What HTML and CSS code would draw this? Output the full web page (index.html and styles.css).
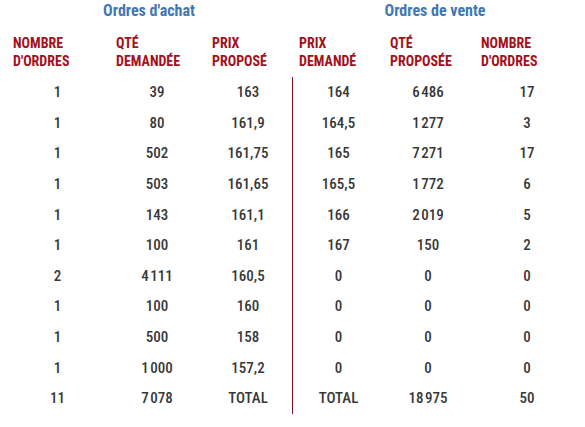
FILE: index.html
```html
<!DOCTYPE html>
<html lang="fr">
<head>
<meta charset="utf-8">
<title>Carnet d'ordres</title>
<link rel="stylesheet" href="styles.css">
</head>
<body>
<div class="book">
  <div class="title title-buy">Ordres d'achat</div>
  <div class="title title-sell">Ordres de vente</div>

  <div class="head c1">NOMBRE<br>D'ORDRES</div>
  <div class="head c2">QTÉ<br>DEMANDÉE</div>
  <div class="head c3">PRIX<br>PROPOSÉ</div>
  <div class="head c4">PRIX<br>DEMANDÉ</div>
  <div class="head c5">QTÉ<br>PROPOSÉE</div>
  <div class="head c6">NOMBRE<br>D'ORDRES</div>

  <div class="cell c1">1</div><div class="cell c2">39</div><div class="cell c3">163</div><div class="cell c4 sep">164</div><div class="cell c5">6&#8239;486</div><div class="cell c6">17</div>
  <div class="cell c1">1</div><div class="cell c2">80</div><div class="cell c3">161,9</div><div class="cell c4 sep">164,5</div><div class="cell c5">1&#8239;277</div><div class="cell c6">3</div>
  <div class="cell c1">1</div><div class="cell c2">502</div><div class="cell c3">161,75</div><div class="cell c4 sep">165</div><div class="cell c5">7&#8239;271</div><div class="cell c6">17</div>
  <div class="cell c1">1</div><div class="cell c2">503</div><div class="cell c3">161,65</div><div class="cell c4 sep">165,5</div><div class="cell c5">1&#8239;772</div><div class="cell c6">6</div>
  <div class="cell c1">1</div><div class="cell c2">143</div><div class="cell c3">161,1</div><div class="cell c4 sep">166</div><div class="cell c5">2&#8239;019</div><div class="cell c6">5</div>
  <div class="cell c1">1</div><div class="cell c2">100</div><div class="cell c3">161</div><div class="cell c4 sep">167</div><div class="cell c5">150</div><div class="cell c6">2</div>
  <div class="cell c1">2</div><div class="cell c2">4&#8239;111</div><div class="cell c3">160,5</div><div class="cell c4 sep">0</div><div class="cell c5">0</div><div class="cell c6">0</div>
  <div class="cell c1">1</div><div class="cell c2">100</div><div class="cell c3">160</div><div class="cell c4 sep">0</div><div class="cell c5">0</div><div class="cell c6">0</div>
  <div class="cell c1">1</div><div class="cell c2">500</div><div class="cell c3">158</div><div class="cell c4 sep">0</div><div class="cell c5">0</div><div class="cell c6">0</div>
  <div class="cell c1">1</div><div class="cell c2">1&#8239;000</div><div class="cell c3">157,2</div><div class="cell c4 sep">0</div><div class="cell c5">0</div><div class="cell c6">0</div>
  <div class="cell c1">11</div><div class="cell c2">7&#8239;078</div><div class="cell c3">TOTAL</div><div class="cell c4 sep">TOTAL</div><div class="cell c5">18&#8239;975</div><div class="cell c6">50</div>
</div>
</body>
</html>
```

FILE: styles.css
```css
html, body {
  margin: 0;
  padding: 0;
  background: #ffffff;
}

body {
  font-family: "Liberation Sans Narrow", "Roboto Condensed", "Liberation Sans", Arial, sans-serif;
  font-weight: bold;
}

.book {
  display: grid;
  grid-template-columns: 115px 89px 88px 92px 88px 110px;
  grid-template-rows: 20px 56px;
  grid-auto-rows: 30.6px;
  padding-top: 1px;
}

.title {
  color: #3f78b5;
  font-size: 16px;
  line-height: 20px;
  text-align: center;
}

.title-buy {
  grid-column: 1 / span 3;
  padding-left: 6px;
}

.title-sell {
  grid-column: 4 / span 3;
  padding-right: 4px;
}

.head {
  color: #a3111b;
  font-size: 14px;
  line-height: 18px;
  margin-top: 13px;
  text-align: left;
}

.head.c1 { padding-left: 13px; }
.head.c2 { padding-left: 1px; }
.head.c3 { padding-left: 8px; }
.head.c4 { padding-left: 7px; }
.head.c5 { padding-left: 6px; }
.head.c6 { padding-left: 9px; }

.cell {
  color: #383838;
  font-size: 15px;
  font-weight: 500;
  display: flex;
  align-items: center;
  justify-content: center;
}

.cell.c2 { padding-right: 5px; }

.sep {
  border-left: 1px solid #7a1424;
}
```
